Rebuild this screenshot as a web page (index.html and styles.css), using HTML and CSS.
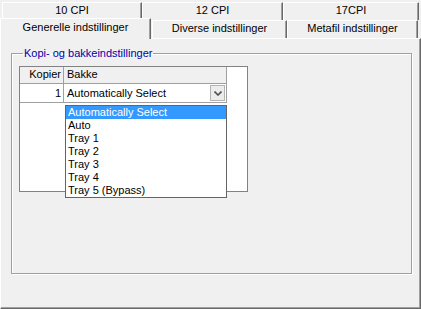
FILE: index.html
```html
<!DOCTYPE html>
<html lang="da">
<head>
    <meta charset="UTF-8">
    <title>Udskriftsindstillinger</title>
    <link rel="stylesheet" href="styles.css">
</head>
<body>

    <div id="tabs">
        <div class="tab-row back">
            <div class="tab t-10">10 CPI</div>
            <div class="tab t-12">12 CPI</div>
            <div class="tab t-17">17CPI</div>
        </div>
        <div class="tab-row front">
            <div class="tab active t-gen">Generelle indstillinger</div>
            <div class="tab t-div">Diverse indstillinger</div>
            <div class="tab t-meta">Metafil indstillinger</div>
        </div>
    </div>

    <div id="panel">
        <fieldset class="group">
            <legend>Kopi- og bakkeindstillinger</legend>

            <div class="grid">
                <div class="grid-row head">
                    <div class="cell col-copies">Kopier</div>
                    <div class="cell col-tray">Bakke</div>
                </div>
                <div class="grid-row">
                    <div class="cell col-copies">1</div>
                    <div class="cell col-tray">
                        <span>Automatically Select</span>
                        <span class="drop-btn">
                            <svg width="8" height="5" viewBox="0 0 8 5">
                                <polyline points="0.5,0.5 4,4 7.5,0.5" fill="none" stroke="#505050" stroke-width="1.6"/>
                            </svg>
                        </span>
                    </div>
                </div>

                <ul class="drop-list">
                    <li class="selected">Automatically Select</li>
                    <li>Auto</li>
                    <li>Tray 1</li>
                    <li>Tray 2</li>
                    <li>Tray 3</li>
                    <li>Tray 4</li>
                    <li>Tray 5 (Bypass)</li>
                </ul>
            </div>
        </fieldset>
    </div>

</body>
</html>
```

FILE: styles.css
```css
body {
    margin: 0;
    width: 421px;
    height: 309px;
    overflow: hidden;
    background-color: #f0f0f0;
    font-family: 'Liberation Sans', Arial, sans-serif;
    font-size: 11px;
    color: #000;
    display: flex;
    flex-direction: column;
}

/* tabs */

#tabs {
    padding-top: 2px;
}

.tab-row {
    display: flex;
    height: 18px;
}

.tab-row.back {
    padding-left: 2px;
}

.tab-row.front {
    align-items: flex-end;
}

.tab {
    box-sizing: border-box;
    height: 18px;
    line-height: 15px;
    text-align: center;
    background-color: #f0f0f0;
    border-top: 1px solid #fff;
    border-left: 1px solid #fff;
    border-right: 1px solid #696969;
    box-shadow: inset -1px 0 0 #a0a0a0;
}

.t-10 { width: 140px; }
.t-12 { width: 141px; }
.t-17 { width: 136px; }

.t-gen { width: 151px; }
.t-div { width: 135px; margin-left: 1px; }
.t-meta { width: 131px; }

.tab.active {
    height: 21px;
    line-height: 16px;
    margin-bottom: -1px;
    position: relative;
    z-index: 1;
}

/* panel */

#panel {
    flex: 1;
    box-sizing: border-box;
    border-top: 1px solid #fff;
    border-left: 1px solid #fff;
    border-right: 1px solid #696969;
    border-bottom: 1px solid #696969;
    box-shadow: inset -1px -1px 0 #a0a0a0;
    padding: 8px 0 0 10px;
}

.group {
    box-sizing: border-box;
    width: 401px;
    height: 227px;
    margin: 0;
    padding: 6px 7px;
    border: 1px solid #a0a0a0;
    box-shadow: inset 1px 1px 0 #fff, 1px 1px 0 #fff;
}

.group legend {
    color: #0000a8;
    padding: 0 1px;
    margin-left: 4px;
    line-height: 13px;
}

/* grid */

.grid {
    position: relative;
    width: 227px;
    height: 124px;
    border: 1px solid #828282;
    background-color: #fff;
}

.grid-row {
    display: flex;
    height: 19px;
}

.grid-row.head {
    height: 17px;
}

.cell {
    box-sizing: border-box;
    border-right: 1px solid #a0a0a0;
    border-bottom: 1px solid #a0a0a0;
    line-height: 16px;
    white-space: nowrap;
}

.head .cell {
    background-color: #f0f0f0;
    line-height: 15px;
}

.col-copies {
    width: 44px;
    text-align: right;
    padding-right: 2px;
}

.col-tray {
    width: 163px;
    padding-left: 3px;
    display: flex;
    align-items: flex-start;
    justify-content: space-between;
}

.grid-row:not(.head) .cell {
    line-height: 18px;
}

.drop-btn {
    box-sizing: border-box;
    width: 15px;
    height: 16px;
    margin: 1px 1px 0 0;
    border: 1px solid #b4b4b4;
    background-color: #ececec;
    display: flex;
    align-items: center;
    justify-content: center;
}

/* dropdown list */

.drop-list {
    position: absolute;
    left: 45px;
    top: 38px;
    width: 160px;
    margin: 0;
    padding: 0;
    list-style: none;
    background-color: #fff;
    border: 1px solid #646464;
}

.drop-list li {
    height: 13px;
    line-height: 13px;
    padding-left: 2px;
}

.drop-list li.selected {
    background-color: #3399ff;
    color: #fff;
}
```
